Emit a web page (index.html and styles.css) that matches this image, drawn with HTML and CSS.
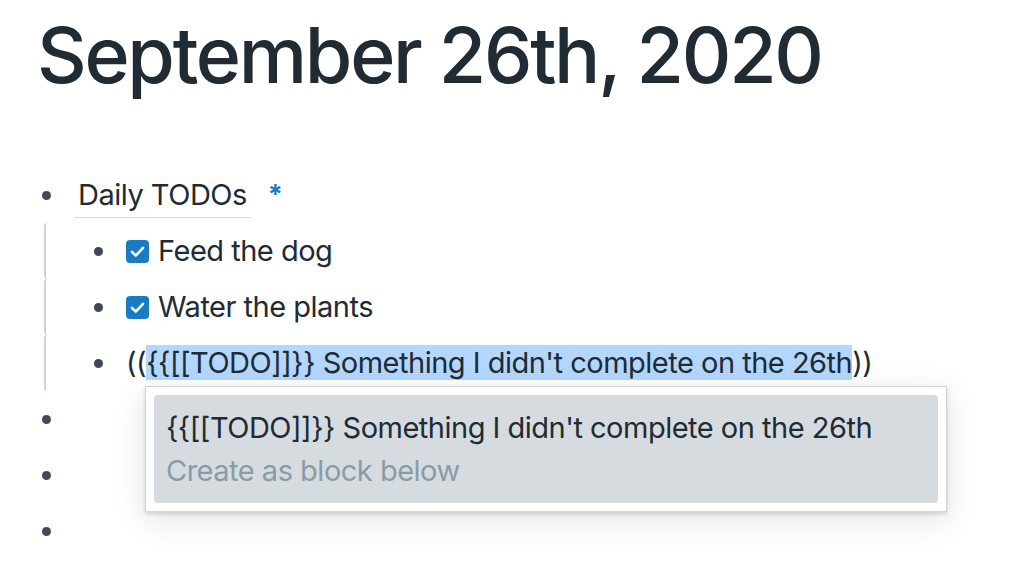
FILE: index.html
```html
<!DOCTYPE html>
<html>
<head>
<meta charset="utf-8">
<link rel="stylesheet" href="styles.css">
</head>
<body>
<div class="page">
  <h1 class="title">September 26th, 2020</h1>
  <div class="tree">
    <div class="row">
      <span class="bullet-wrap"><span class="bullet"></span></span>
      <div class="content"><span class="ref">Daily TODOs</span><span class="star">*</span></div>
    </div>
    <div class="children">
      <div class="child">
        <div class="row">
          <span class="bullet-wrap"><span class="bullet"></span></span>
          <div class="content"><svg class="check" width="23" height="23" viewBox="0 0 23 23"><rect width="23" height="23" rx="4" fill="#1a7bc2"/><path d="M6 11.8 L9.8 15.6 L17 7.8" fill="none" stroke="#fff" stroke-width="2.6" stroke-linecap="round" stroke-linejoin="round"/></svg><span>Feed the dog</span></div>
        </div>
      </div>
      <div class="child">
        <div class="row">
          <span class="bullet-wrap"><span class="bullet"></span></span>
          <div class="content"><svg class="check" width="23" height="23" viewBox="0 0 23 23"><rect width="23" height="23" rx="4" fill="#1a7bc2"/><path d="M6 11.8 L9.8 15.6 L17 7.8" fill="none" stroke="#fff" stroke-width="2.6" stroke-linecap="round" stroke-linejoin="round"/></svg><span>Water the plants</span></div>
        </div>
      </div>
      <div class="child">
        <div class="row">
          <span class="bullet-wrap"><span class="bullet"></span></span>
          <div class="content editing">((<span class="sel">{{[[TODO]]}} Something I didn't complete on the 26th</span>))
            <div class="popup">
              <div class="item">
                <div class="item-main">{{[[TODO]]}} Something I didn't complete on the 26th</div>
                <div class="item-sub">Create as block below</div>
              </div>
            </div>
          </div>
        </div>
      </div>
    </div>
    <div class="row">
      <span class="bullet-wrap"><span class="bullet"></span></span>
      <div class="content"></div>
    </div>
    <div class="row">
      <span class="bullet-wrap"><span class="bullet"></span></span>
      <div class="content"></div>
    </div>
    <div class="row">
      <span class="bullet-wrap"><span class="bullet"></span></span>
      <div class="content"></div>
    </div>
  </div>
</div>
</body>
</html>
```

FILE: styles.css
```css
html, body {
  margin: 0;
  padding: 0;
  background: #ffffff;
}

body {
  font-family: Inter, "Noto Sans", "Liberation Sans", sans-serif;
  color: #202b33;
  overflow: hidden;
}

.page {
  padding: 17px 0 0 37px;
}

.title {
  margin: 0;
  font-size: 77px;
  line-height: 77px;
  font-weight: 500;
  letter-spacing: -2.3px;
  color: #202b33;
}

.tree {
  margin-top: 73px;
}

.row {
  display: flex;
  align-items: center;
  height: 56px;
}

.bullet-wrap {
  width: 18px;
  height: 18px;
  display: flex;
  align-items: center;
  justify-content: center;
  flex: none;
}

.bullet {
  width: 9px;
  height: 9px;
  border-radius: 50%;
  background: #3d4a55;
}

.content {
  margin-left: 19px;
  font-size: 29px;
  line-height: 44px;
  letter-spacing: -0.5px;
  display: flex;
  align-items: center;
  white-space: nowrap;
}

.ref {
  padding: 0 5px 0 4px;
  border-bottom: 1px solid #d3dde5;
}

.star {
  color: #1a7bc2;
  font-weight: 700;
  margin-left: 16px;
  font-size: 27px;
}

.children {
  margin-left: 7px;
  padding-left: 0;
}

.child {
  border-left: 2px solid #c9d4dd;
  border-radius: 3px;
  margin: 1px 0 2px;
  padding-left: 43px;
}

.child .row {
  height: 56px;
  margin: -1px 0 -2px;
}

.check {
  flex: none;
  margin-right: 9px;
}

.editing {
  position: relative;
  display: block;
}

.sel {
  background: #b3d7fe;
}

.popup {
  position: absolute;
  left: 19px;
  top: 45px;
  width: 784px;
  padding: 8px;
  background: #ffffff;
  border: 1px solid #d4d4d4;
  box-shadow: 0 2px 4px rgba(16, 22, 26, 0.15), 0 8px 30px rgba(16, 22, 26, 0.12);
  z-index: 10;
}

.item {
  background: #d6dbdf;
  border-radius: 4px;
  padding: 11px 12px;
}

.item-main {
  line-height: 43px;
  color: #202b33;
}

.item-sub {
  line-height: 43px;
  color: #8a9ba8;
}
```
